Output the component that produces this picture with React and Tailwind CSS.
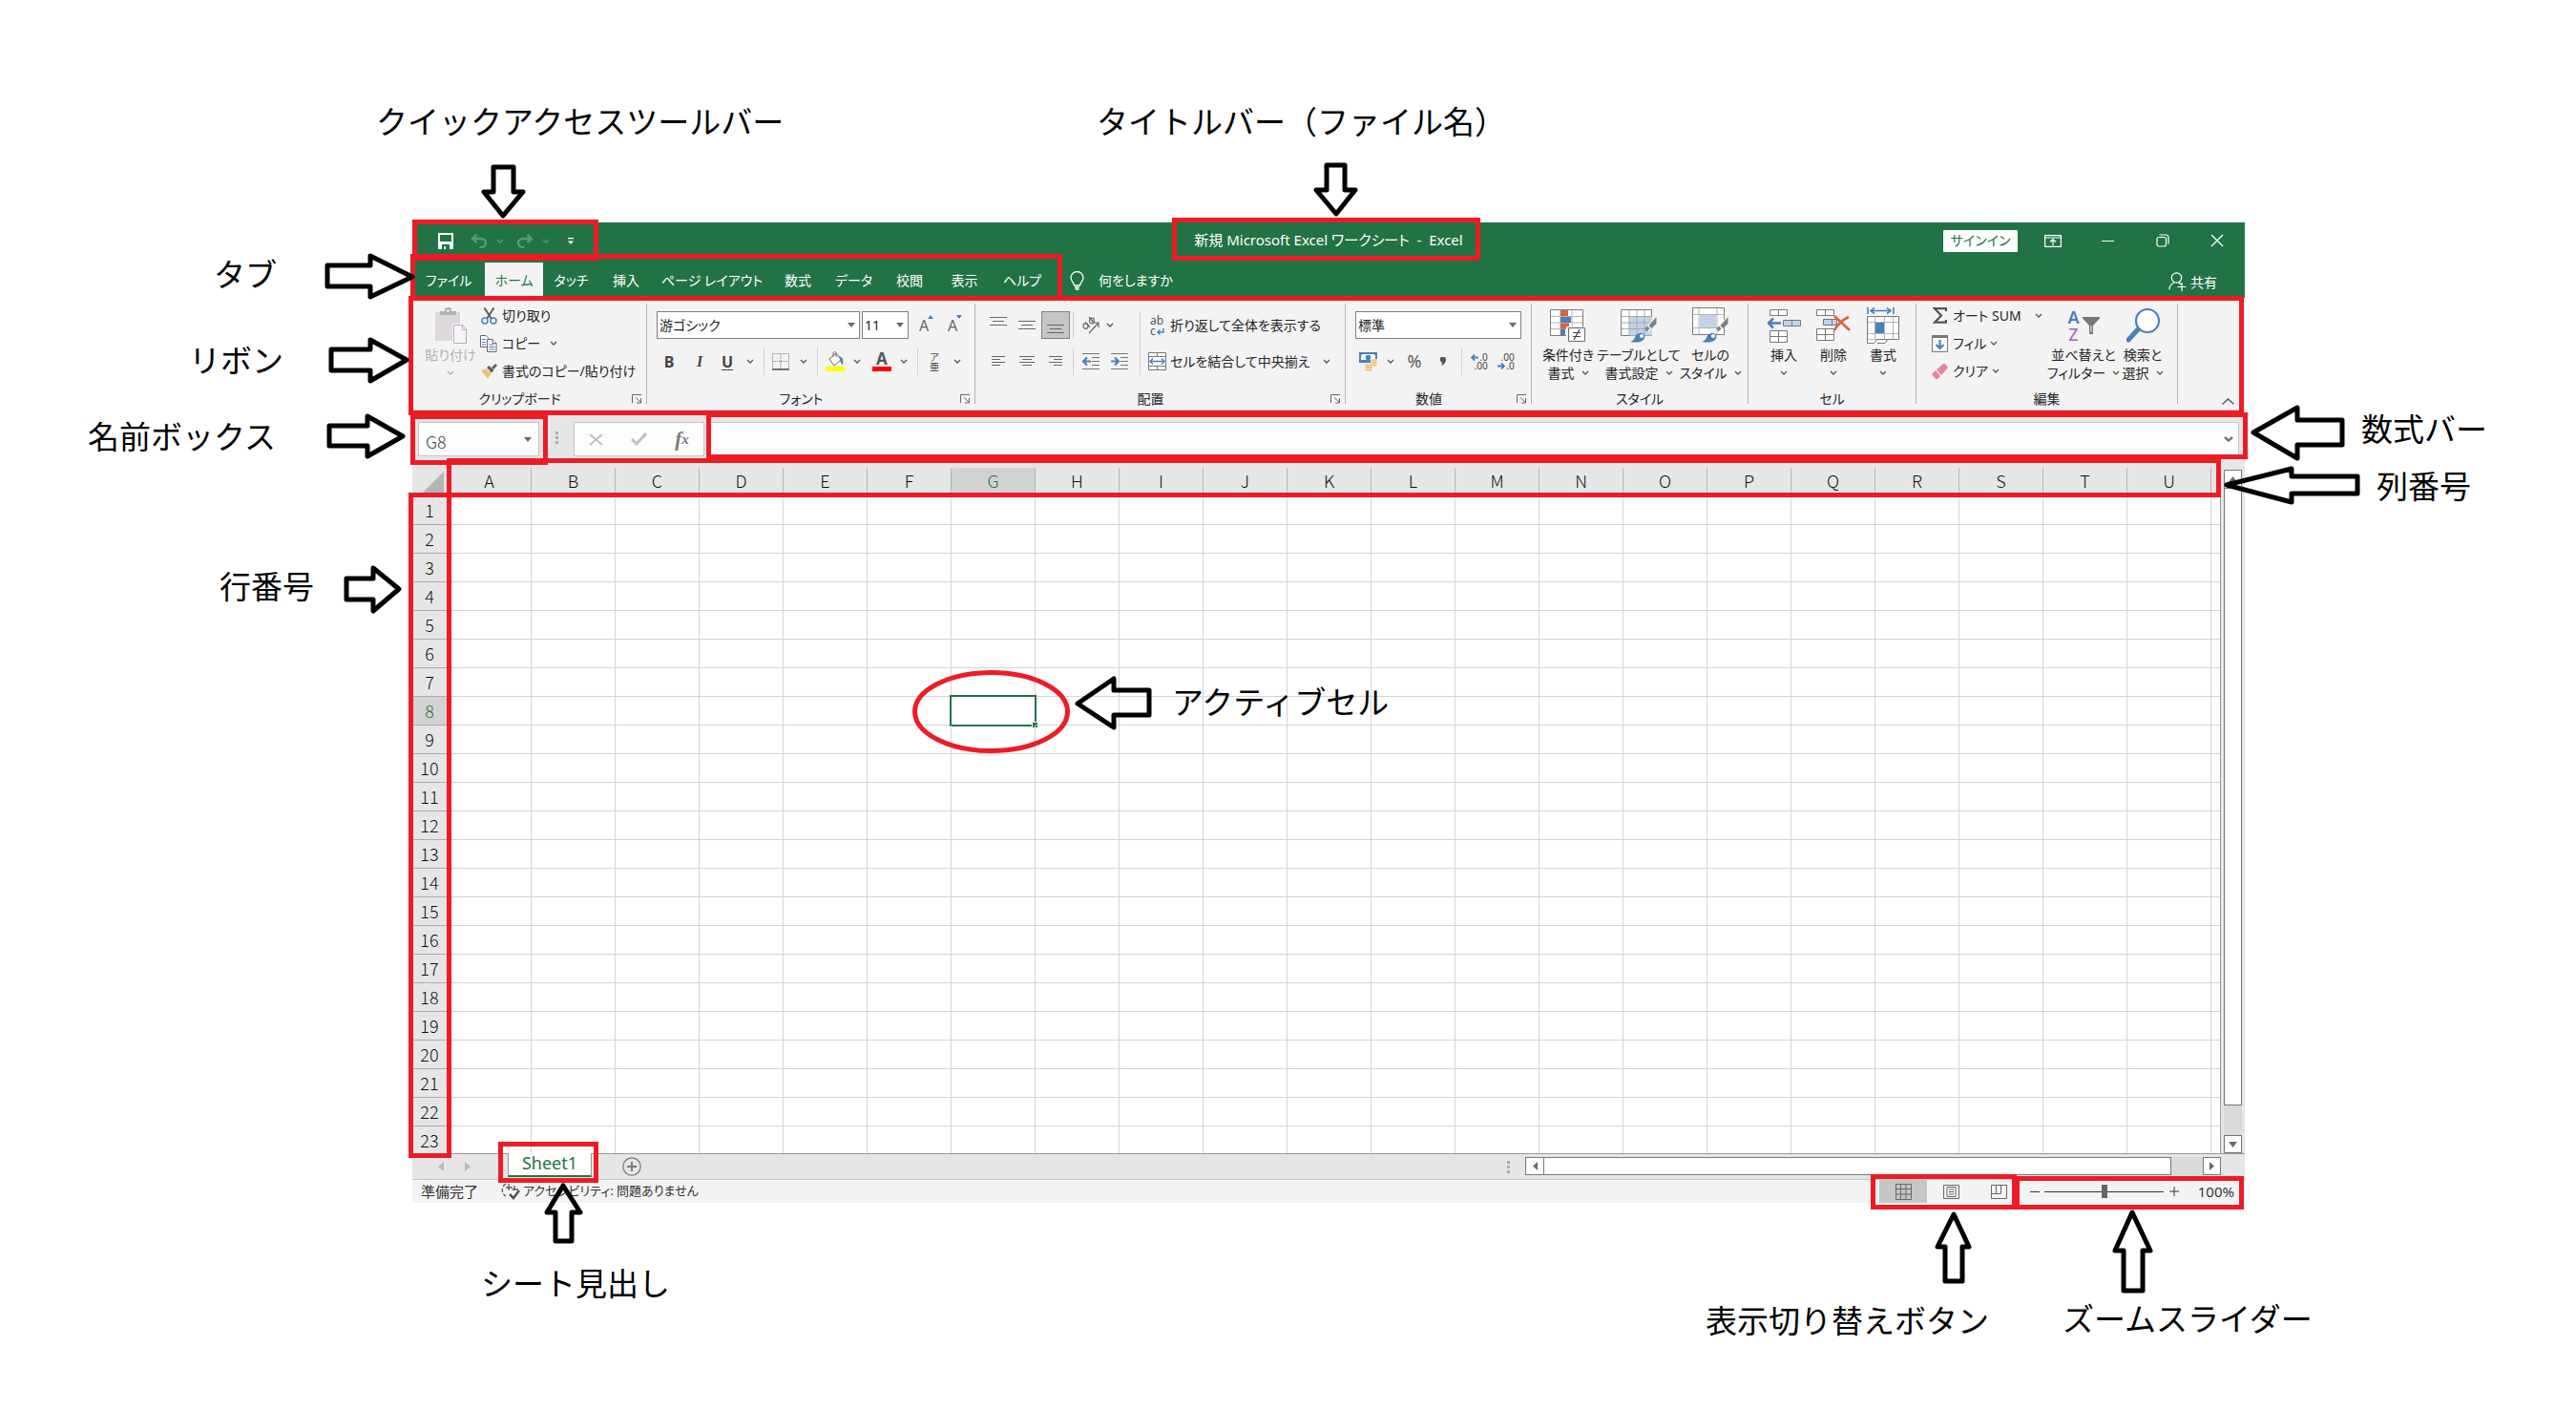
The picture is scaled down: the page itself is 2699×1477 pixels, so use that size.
import React, { useState } from 'react';

const COLUMNS = 'ABCDEFGHIJKLMNOPQRSTU'.split('');
const ROWS = Array.from({ length: 23 }, (_, i) => i + 1);

const TABS = [
  { name: 'ファイル', width: 'w-[76px]' },
  { name: 'ホーム', width: 'w-[61px]', active: true },
  { name: 'タッチ', width: 'w-[59px]' },
  { name: '挿入', width: 'w-[56px]' },
  { name: 'ページ レイアウト', width: 'w-[124px]' },
  { name: '数式', width: 'w-[56px]' },
  { name: 'データ', width: 'w-[61px]' },
  { name: '校閲', width: 'w-[56px]' },
  { name: '表示', width: 'w-[59px]' },
  { name: 'ヘルプ', width: 'w-[62px]' },
];

const NOTES = [
  { text: 'クイックアクセスツールバー', pos: 'left-[394px] top-[104px]' },
  { text: 'タイトルバー（ファイル名）', pos: 'left-[1149px] top-[104px]' },
  { text: 'タブ', pos: 'left-[224px] top-[264px]' },
  { text: 'リボン', pos: 'left-[198px] top-[354px]' },
  { text: '名前ボックス', pos: 'left-[92px] top-[434px]' },
  { text: '行番号', pos: 'left-[230px] top-[591px]' },
  { text: '数式バー', pos: 'left-[2474px] top-[426px]' },
  { text: '列番号', pos: 'left-[2490px] top-[486px]' },
  { text: 'アクティブセル', pos: 'left-[1228px] top-[712px]' },
  { text: 'シート見出し', pos: 'left-[504px] top-[1321px]' },
  { text: '表示切り替えボタン', pos: 'left-[1787px] top-[1360px]' },
  { text: 'ズームスライダー', pos: 'left-[2161px] top-[1358px]' },
];

const ARROWS = [
  '517,175 538,175 538,201 548,201 527,226 507,201 517,201',
  '1390,173 1409,173 1409,199 1420,199 1400,224 1379,199 1390,199',
  '343,278 388,278 388,268 432,290 388,311 388,300 343,300',
  '347,366 388,366 388,356 426,377 388,399 388,388 347,388',
  '345,446 385,446 385,436 422,457 385,478 385,467 345,467',
  '363,606 391,606 391,595 418,617 391,640 391,628 363,628',
  '2361,453 2407,427 2407,440 2454,440 2454,466 2407,466 2407,480',
  '2333,508 2401,491 2401,499 2470,499 2470,517 2401,517 2401,526',
  '1129,737 1167,711 1167,723 1204,723 1204,749 1167,749 1167,762',
  '590,1242 608,1270 599,1270 599,1300 582,1300 582,1270 573,1270',
  '2047,1272 2063,1306 2056,1306 2056,1342 2038,1342 2038,1306 2030,1306',
  '2234,1270 2253,1310 2245,1310 2245,1352 2225,1352 2225,1310 2216,1310',
];

// x, y, width, height of the outer edge
const FRAMES = [
  [432, 230, 195, 43],
  [430, 266, 683, 49],
  [1228, 228, 323, 45],
  [428, 310, 923, 125],
  [430, 434, 144, 53],
  [740, 432, 1615, 49],
  [468, 480, 1859, 41],
  [428, 516, 45, 697],
  [522, 1196, 105, 43],
  [1960, 1230, 153, 37],
  [2111, 1232, 240, 35],
];
FRAMES[3][2] = 1923;

/* ---------- small shared pieces ---------- */

function Chevron({ className = 'text-[#555]' }) {
  return (
    <svg width="8" height="5" viewBox="0 0 8 5" fill="none" stroke="currentColor" strokeWidth="1.3" className={className}>
      <path d="M1 1l3 3 3-3" />
    </svg>
  );
}

function Triangle({ className }) {
  return (
    <svg width="8" height="5" viewBox="0 0 8 5" fill="#6a6a6a" className={className}>
      <path d="M0 0h8L4 5z" />
    </svg>
  );
}

function Tool({ label, w, className = '', children }) {
  return (
    <button type="button" aria-label={label} className={`flex h-full shrink-0 items-center justify-center ${w} ${className}`}>
      {children}
    </button>
  );
}

function Divider({ w }) {
  return (
    <div className={`flex h-full justify-center shrink-0 ${w}`}>
      <div className="h-full w-px bg-[#d0d0d0]" />
    </div>
  );
}

function Combo({ label, value, w }) {
  return (
    <div className={`relative h-[29px] shrink-0 ${w}`}>
      <select aria-label={label} className="h-full w-full appearance-none border border-[#7f7f7f] bg-white pl-[2px] text-[14px] text-[#222]">
        <option>{value}</option>
      </select>
      <Triangle className="pointer-events-none absolute right-[5px] top-[12px]" />
    </div>
  );
}

function Group({ title, w, launcher, children }) {
  return (
    <section className={`flex shrink-0 ${w}`}>
      <div className="flex min-w-0 flex-1 flex-col">
        <div className="h-[95px]">{children}</div>
        <div className="flex h-[23px] items-center">
          <h2 className="flex-1 text-center text-[14px] leading-[20px]">{title}</h2>
          {launcher && (
            <button type="button" aria-label={`${title}の詳細`} className="w-[20px] pl-[5px]">
              <svg width="11" height="10" viewBox="0 0 11 10" fill="none" stroke="#666">
                <path d="M.5 9V.5H10M4 3.500l5.500 5M9.500 4v5H5" />
              </svg>
            </button>
          )}
        </div>
      </div>
      <div className="my-[6px] w-px bg-[#b4b4b4]" />
    </section>
  );
}

function BigButton({ icon, lines, w, muted }) {
  return (
    <button type="button" className={`flex shrink-0 flex-col items-center pt-[10px] ${w} ${muted ? 'text-[#b1b1b1]' : ''}`}>
      <span className="mb-[2px] flex h-[38px] items-center">{icon}</span>
      <span className="whitespace-nowrap text-[14px] leading-[19px]">{lines[0]}</span>
      <span className="flex h-[19px] items-center gap-[7px] whitespace-nowrap text-[14px] leading-[19px]">
        {lines[1]}
        <Chevron className={muted ? 'text-[#b1b1b1]' : 'text-[#555]'} />
      </span>
    </button>
  );
}

function ListButton({ icon, text, arrow, arrowGap = 'ml-[10px]' }) {
  return (
    <button type="button" className="flex h-[29px] items-center whitespace-nowrap text-[14px]">
      <span className="mr-[4px] flex w-[20px] justify-center">{icon}</span>
      {text}
      {arrow && (
        <span className={arrowGap}>
          <Chevron />
        </span>
      )}
    </button>
  );
}

/* ---------- icons ---------- */

const SaveIcon = () => (
  <svg width="16" height="17" viewBox="0 0 16 17">
    <path d="M0 0h16v17H0zM2 2v7h12V2zM4 12v5h2v-3h2v3h4v-5z" fill="#fff" fillRule="evenodd" />
  </svg>
);

const UndoIcon = ({ flip }) => (
  <svg width="18" height="15" viewBox="0 0 18 15" fill="none" stroke="#599a75" strokeWidth="2.500" className={flip ? '-scale-x-100' : ''}>
    <path d="M6.500 .8L2 5l4.500 4M2.500 5H11c3 0 5 2 5 4.500S14 14 11 14H9.500" />
  </svg>
);

const PasteIcon = () => (
  <svg width="35" height="38" viewBox="0 0 35 38">
    <path d="M1 5h26v30H1z" fill="#dcd8dc" />
    <path d="M6 8V4h5V1.500L13 0h3l2 1.500V4h5v4z" fill="#b4b0b4" />
    <path d="M13 2.500h3v2h-3z" fill="#f3f3f3" />
    <path d="M19 17h16v21H19z" fill="#f3f3f3" />
    <path d="M20.500 18.500h9l4 5v14h-13zM29.500 18.500v5h4" fill="#f8f3f9" stroke="#b4b0b4" />
  </svg>
);

const CutIcon = () => (
  <svg width="17" height="18" viewBox="0 0 17 18" fill="none">
    <path d="M3.500 .5L11 12M13.500 .5L6 12" stroke="#5f5f5f" strokeWidth="2" />
    <circle cx="4" cy="14" r="3" stroke="#4a80bc" strokeWidth="1.500" />
    <circle cx="13" cy="14" r="3" stroke="#4a80bc" strokeWidth="1.500" />
  </svg>
);

const CopyIcon = () => (
  <svg width="18" height="18" viewBox="0 0 18 18" fill="#fff" stroke="#6a6a6a">
    <path d="M.5 .5H6l3 3v9H.5z" />
    <path d="M7.500 4.500H13l4 4v9H7.500z" />
    <path d="M13 4.500v4h4" />
    <path d="M2 4.500h4M2 7.500h4M2 10h4M9.500 10h5M9.500 12.500h6M9.500 15h6" stroke="#4a80bc" />
  </svg>
);

const BrushIcon = () => (
  <svg width="17" height="16" viewBox="0 0 17 16">
    <path d="M0 7l5-2 6 5-4 6z" fill="#eec27e" />
    <path d="M6 4l2.500-2 5 5L11 9.500z" fill="#5f5f5f" />
    <path d="M11 4l4-4 2 2-4 4z" fill="#5f5f5f" />
  </svg>
);

const FontSizeIcon = ({ down }) => (
  <span className="relative text-[16px] leading-[20px] text-[#666]">
    A
    <svg width="6" height="4" viewBox="0 0 6 4" fill="#4a80bc" className="absolute -right-[5px] -top-[1px]">
      <path d={down ? 'M0 0h6L3 4z' : 'M0 4h6L3 0z'} />
    </svg>
  </span>
);

const BorderIcon = () => (
  <svg width="18" height="18" viewBox="0 0 18 18" fill="none" stroke="#777">
    <path d="M.5 .5h17v16H.5zM9 1v16M1 8.500h16" strokeDasharray="1 1" />
    <path d="M0 17h18" stroke="#555" strokeWidth="1.500" />
  </svg>
);

const FillColorIcon = () => (
  <svg width="21" height="21" viewBox="0 0 21 21">
    <path d="M0 16h20v5H0z" fill="#ff0" />
    <path d="M4 8l7-6 5 7-7 6z" fill="#fff" stroke="#6a6a6a" />
    <path d="M8 6V2c0-2 3-2 3 0v4" fill="none" stroke="#6a6a6a" />
    <path d="M14 5c4 1 5 4 4 9-2-1-3-3-2-5z" fill="#4a80bc" />
  </svg>
);

const FontColorIcon = () => (
  <span className="flex flex-col items-center">
    <span className="text-[17px] font-bold leading-[16px] text-[#555]">A</span>
    <span className="h-[5px] w-[20px] bg-[#f00]" />
  </span>
);

const LINE_SETS = {
  top: 'M0 1.500h18M3 5.500h12M0 9.500h18',
  middle: 'M0 5.500h18M3 9.500h12M0 13.500h18',
  bottom: 'M0 9.500h18M3 13.500h12M0 17.500h18',
  left: 'M2 4.500h14M2 7.500h9M2 10.500h14M2 13.500h9',
  center: 'M1 4.500h16M4 7.500h10M1 10.500h16M4 13.500h10',
  right: 'M2 4.500h14M7 7.500h9M2 10.500h14M7 13.500h9',
};

const LinesIcon = ({ kind }) => (
  <svg width="18" height="19" viewBox="0 0 18 19" stroke="#666">
    <path d={LINE_SETS[kind]} />
  </svg>
);

const OrientationIcon = () => (
  <svg width="20" height="20" viewBox="0 0 20 20" fill="none" stroke="#666" strokeWidth="1.200">
    <path d="M8 18L18 7M13 7h5v5" />
    <ellipse cx="4.500" cy="10.500" rx="2.500" ry="2.800" />
    <path d="M4 6.500l5 5M8 1l5 6" />
    <ellipse cx="11" cy="5" rx="2.500" ry="2.800" />
  </svg>
);

const IndentIcon = ({ out }) => (
  <svg width="18" height="17" viewBox="0 0 18 17" fill="none" stroke="#777">
    <path d="M0 .5h18M10 4.500h8M10 8.500h8M10 12.500h8M0 16.500h18" />
    <path d={out ? 'M9 8.500H2M5 4.500l-4 4 4 4' : 'M0 8.500h7M4 4.500l4 4-4 4'} stroke="#4a80bc" strokeWidth="2.200" />
  </svg>
);

const WrapIcon = () => (
  <span className="relative flex flex-col text-[12px] leading-[11px] text-[#555]">
    <span className="h-[11px]">ab</span>
    <span className="h-[11px] text-left">c</span>
    <svg width="9" height="8" viewBox="0 0 9 8" fill="none" stroke="#4a80bc" strokeWidth="1.500" className="absolute -right-px bottom-0">
      <path d="M8 0v4H2M4.500 1.500L2 4l2.500 2.500" />
    </svg>
  </span>
);

const MergeIcon = () => (
  <svg width="19" height="19" viewBox="0 0 19 19" fill="#fff" stroke="#777">
    <path d="M.5 .5h18v18H.5z" />
    <path d="M.5 4.500h18M.5 14.500h18M9.500 .5v4M9.500 14.500v4" />
    <path d="M2 9.500h15M5 6.500l-3 3 3 3M14 6.500l3 3-3 3" stroke="#4a80bc" strokeWidth="1.500" fill="none" />
  </svg>
);

const MoneyIcon = () => (
  <svg width="20" height="20" viewBox="0 0 20 20">
    <path d="M0 0h19v11H0z" fill="#4a80bc" />
    <path d="M2 3l2-1h11l2 1v5H2z" fill="#fff" />
    <circle cx="9.500" cy="5.500" r="2.800" fill="#4a80bc" />
    <path d="M12 7h7v10h-7zM6 12h8v8H6z" fill="#f3f3f3" />
    <path d="M12.500 8.500h6M12.500 11h6M12.500 13.500h6M6.500 13.500h7M6.500 16h7M6.500 18.500h7" stroke="#eec27e" strokeWidth="1.800" />
  </svg>
);

const ArrowGlyph = ({ left }) => (
  <svg width="8" height="7" viewBox="0 0 8 7" fill="none" stroke="#4a80bc" strokeWidth="1.800">
    <path d={left ? 'M8 3.500H1.500M4 .5l-3 3 3 3' : 'M0 3.500h6.500M4 .5l3 3-3 3'} />
  </svg>
);

const DecimalIcon = ({ less }) => (
  <span className="flex flex-col text-[10px] leading-[9px] text-[#444]">
    <span className="flex items-center justify-end gap-px">
      {!less && <ArrowGlyph left />}
      {less ? '.00' : '.0'}
    </span>
    <span className="flex items-center justify-end gap-px">
      {less && <ArrowGlyph />}
      {less ? '.0' : '.00'}
    </span>
  </span>
);

const ConditionalIcon = () => (
  <svg width="38" height="36" viewBox="0 0 38 36">
    <path d="M.5 1.500h34v27H.5z" fill="#fff" stroke="#7a7a7a" />
    <path d="M1 8.500h33M1 15h33M1 21.500h33M11 2v26M23 2v26" stroke="#b4b4b4" />
    <path d="M11 2h8v6h-8zM11 15.500h9v6h-9z" fill="#dc6140" />
    <path d="M11 9h11v6H11zM11 22h5v6h-5z" fill="#4a80bc" />
    <path d="M17 19h21v17H17z" fill="#f3f3f3" />
    <path d="M19.500 20.500h17v14h-17z" fill="#fff" stroke="#6a6a6a" />
    <path d="M24 25.500h8M24 29.500h8M31 22l-6 11" stroke="#444" strokeWidth="1.200" />
  </svg>
);

const BrushOverlay = () => (
  <>
    <path d="M38 7v9l-9 9-4-4z" fill="#f3f3f3" />
    <path d="M37.500 9v7l-5 5-3-3zM25 21l3-2.500 2.500 2.500-3 3.500z" fill="#808080" />
    <path d="M10 35c6-1 4-8 10-9 5-1 7 4 4 7-3 3-9 3-14 2z" fill="#4a80bc" />
    <path d="M20 28c2-2 4-1 4 1s-2 3-4 1z" fill="#fff" />
  </>
);

const TableFormatIcon = () => (
  <svg width="38" height="36" viewBox="0 0 38 36">
    <path d="M.5 1.500h32v27H.5z" fill="#fff" stroke="#7a7a7a" />
    <path d="M9 8.500h24v20H9z" fill="#c0d3e9" />
    <path d="M1 8.500h31M1 15h31M1 21.500h31M9 2v26M17 2v26M25 2v26" stroke="#a5aab0" />
    <BrushOverlay />
  </svg>
);

const CellStyleIcon = () => (
  <svg width="38" height="38" viewBox="0 -1 38 38">
    <path d="M.5 -.5h33v28H.5z" fill="#fff" stroke="#7a7a7a" />
    <path d="M1 6.500h32M1 20.500h32M7 0v27M26 0v27" stroke="#b4b4b4" />
    <path d="M8 7h17v13H8z" fill="#c0d3e9" />
    <BrushOverlay />
  </svg>
);

const InsertIcon = () => (
  <svg width="36" height="36" viewBox="0 0 36 36" fill="#fff" stroke="#777">
    <path d="M3.500 1.500h18v6h-18zM12.500 1.500v6M3.500 23.500h18v12h-18zM3.500 29.500h18M12.500 23.500v12" />
    <path d="M17.500 12.500h18v6h-18zM26.500 12.500v6" fill="#c0d3e9" />
    <path d="M15 15.500H2M7 10.500l-5 5 5 5" stroke="#4a80bc" strokeWidth="2.500" fill="none" />
  </svg>
);

const DeleteIcon = () => (
  <svg width="36" height="36" viewBox="0 0 36 36" fill="#fff" stroke="#777">
    <path d="M.5 1.500h18v6H.5zM9.500 1.500v6M.5 21.500h18v12H.5zM.5 27.500h18M9.500 21.500v12" />
    <path d="M7.500 11.500h14v6h-14zM16.500 11.500v6" fill="#c0d3e9" />
    <path d="M19 8l16 15M34 9C28 12 22 17 19 23" stroke="#dc6140" strokeWidth="2.600" fill="none" />
  </svg>
);

const FormatIcon = () => (
  <svg width="35" height="38" viewBox="0 0 35 38" fill="#fff" stroke="#777">
    <path d="M1 0v7M28 0v7M4 3.500h21M8 .5l-4 3 4 3M21 .5l4 3-4 3" stroke="#4a80bc" strokeWidth="1.600" fill="none" />
    <path d="M.5 9.500h33v24H.5z" />
    <path d="M1 15.500h32M1 27.500h32M8.500 10v23M18.500 10v23M27.500 10v23" stroke="#b4b4b4" />
    <path d="M9 16h9v11H9z" fill="#4a80bc" stroke="none" />
    <path d="M.5 33.500v4h7l3-4M11 37.500h8l3-4" />
  </svg>
);

const SigmaIcon = () => (
  <svg width="15" height="17" viewBox="0 0 15 17" fill="none" stroke="#555" strokeWidth="2.200">
    <path d="M14 4V1.200H2L9 8.500l-7 7.200h12V13" />
  </svg>
);

const FillDownIcon = () => (
  <svg width="17" height="18" viewBox="0 0 17 18">
    <path d="M.5 .5h16v17H.5z" fill="#fff" stroke="#777" />
    <path d="M0 0h17v3H0z" fill="#777" />
    <path d="M8.500 5v9M4.500 10l4 4 4-4" fill="none" stroke="#4a80bc" strokeWidth="2.200" />
  </svg>
);

const EraserIcon = () => (
  <svg width="17" height="16" viewBox="0 0 17 16" fill="#e8849a">
    <path d="M5 6l7-6h2l3 4-7 8z" />
    <path d="M4 7l5 6-3 3H4l-4-5z" />
  </svg>
);

const SortIcon = () => (
  <span className="flex items-center gap-[3px]">
    <span className="flex flex-col text-[18px] leading-[18px]">
      <span className="font-semibold text-[#4a80bc]">A</span>
      <span className="text-[#9b5fb8]">Z</span>
    </span>
    <svg width="18" height="18" viewBox="0 0 18 18" fill="#777">
      <path d="M0 0h18v1.500L11 9v9H7V9L0 1.500z" />
      <path d="M8.500 9h1v7h-1z" fill="#f3f3f3" />
    </svg>
  </span>
);

const FindIcon = () => (
  <svg width="35" height="36" viewBox="0 0 35 36" fill="none" stroke="#4a80bc">
    <path d="M13 21L2 33" strokeWidth="5" strokeLinecap="round" />
    <circle cx="22" cy="13" r="12" fill="#fff" strokeWidth="2.200" />
  </svg>
);

/* ---------- window parts ---------- */

function TitleBar() {
  return (
    <header className="relative flex h-[42px] items-center justify-between bg-[#217346] text-white">
      <div className="flex items-center pb-[4px] pl-[27px]">
        <button type="button" aria-label="上書き保存"><SaveIcon /></button>
        <button type="button" aria-label="元に戻す" className="ml-[18px]"><UndoIcon /></button>
        <span className="ml-[9px]"><Chevron className="text-[#599a75]" /></span>
        <button type="button" aria-label="やり直し" className="ml-[13px]"><UndoIcon flip /></button>
        <span className="ml-[9px]"><Chevron className="text-[#599a75]" /></span>
        <button type="button" aria-label="クイック アクセス ツール バーのユーザー設定" className="ml-[19px]">
          <svg width="6" height="7" viewBox="0 0 6 7" fill="#fff">
            <path d="M0 0h6v1.300H0zM0 3.500h6L3 7z" />
          </svg>
        </button>
      </div>
      <h1 className="absolute inset-x-0 top-[8px] text-center text-[15px] leading-[20px] whitespace-pre">
        新規 Microsoft Excel ワークシート  -  Excel
      </h1>
      <div className="relative flex items-center pb-[4px]">
        <button type="button" className="mr-[8px] h-[23px] w-[78px] rounded-[1px] bg-white text-[14px] leading-[20px] text-[#217346]">サインイン</button>
        <button type="button" aria-label="リボンの表示オプション" className="flex w-[58px] justify-center">
          <svg width="18" height="13" viewBox="0 0 18 13" fill="none" stroke="#fff" strokeWidth="1.200">
            <path d="M.6 .6h16.800v11.800H.6zM.6 3h16.800M9 11V5M6 7.500l3-3 3 3" />
          </svg>
        </button>
        <button type="button" aria-label="最小化" className="flex w-[57px] justify-center">
          <span className="h-px w-[13px] bg-white" />
        </button>
        <button type="button" aria-label="元に戻す (縮小)" className="flex w-[57px] justify-center">
          <svg width="14" height="14" viewBox="0 0 14 14" fill="none" stroke="#fff" strokeWidth="1.200">
            <rect x="1" y="3.500" width="9.500" height="9.500" rx="2" />
            <path d="M3.500 1h6.500c2 0 3 1 3 3v6.500" />
          </svg>
        </button>
        <button type="button" aria-label="閉じる" className="flex w-[58px] justify-center">
          <svg width="14" height="14" viewBox="0 0 14 14" stroke="#fff" strokeWidth="1.300">
            <path d="M1 1l12 12M13 1L1 13" />
          </svg>
        </button>
      </div>
    </header>
  );
}

function TabRow() {
  return (
    <nav className="flex h-[37px] bg-[#217346] text-[14px] text-white">
      {TABS.map((tab) => (
        <button
          key={tab.name}
          type="button"
          className={`whitespace-nowrap ${tab.width} ${tab.active ? 'bg-[#f3f3f3] text-[#217346]' : ''}`}
        >
          {tab.name}
        </button>
      ))}
      <button type="button" className="ml-[19px] flex items-center">
        <svg width="15" height="20" viewBox="0 0 15 20" fill="none" stroke="#fff" strokeWidth="1.300" className="mr-[15px]">
          <path d="M4.500 15c0-3-3.500-4-3.500-8a6.500 6.500 0 0113 0c0 4-3.500 5-3.500 8zM5 17h5M5.500 19h4" />
        </svg>
        何をしますか
      </button>
      <button type="button" className="ml-auto mr-[29px] flex items-center gap-[4px] pt-[3px]">
        <svg width="19" height="20" viewBox="0 0 19 20" fill="none" stroke="#fff" strokeWidth="1.200">
          <circle cx="8.500" cy="6" r="5.200" />
          <path d="M1 18.500c0-4 2-6.500 5-7.500M11 11l2 2M14 11v9M9.500 15.500h9" />
        </svg>
        共有
      </button>
    </nav>
  );
}

function Ribbon() {
  return (
    <div className="flex h-[118px] border-b border-[#d2d2d2] bg-[#f3f3f3] text-[#262626]">
      <Group title="クリップボード" w="w-[246px]" launcher>
        <div className="flex">
          <BigButton icon={<PasteIcon />} lines={['貼り付け', '']} w="ml-[10px] w-[60px]" muted />
          <div className="flex flex-col pt-[4px]">
            <ListButton icon={<CutIcon />} text="切り取り" />
            <ListButton icon={<CopyIcon />} text="コピー" arrow />
            <ListButton icon={<BrushIcon />} text="書式のコピー/貼り付け" />
          </div>
        </div>
      </Group>

      <Group title="フォント" w="w-[344px]" launcher>
        <div className="flex flex-col gap-[9px] pt-[14px]">
          <div className="flex h-[29px] gap-[2px] pl-[10px]">
            <Combo label="フォント" value="游ゴシック" w="w-[213px]" />
            <Combo label="フォント サイズ" value="11" w="w-[49px]" />
            <Tool label="フォント サイズの拡大" w="w-[28px]"><FontSizeIcon /></Tool>
            <Tool label="フォント サイズの縮小" w="w-[28px]"><FontSizeIcon down /></Tool>
          </div>
          <div className="flex h-[29px] items-center pl-[6px] text-[16px] text-[#444]">
            <Tool label="太字" w="w-[34px]" className="font-bold">B</Tool>
            <Tool label="斜体" w="w-[30px]" className="font-['Liberation_Serif',serif] font-bold italic">I</Tool>
            <Tool label="下線" w="w-[28px]" className="font-bold underline underline-offset-2">U</Tool>
            <Tool label="下線の種類" w="w-[20px]"><Chevron /></Tool>
            <Divider w="w-[8px]" />
            <Tool label="罫線" w="w-[28px]"><BorderIcon /></Tool>
            <Tool label="罫線の種類" w="w-[20px]"><Chevron /></Tool>
            <Divider w="w-[8px]" />
            <Tool label="塗りつぶしの色" w="w-[30px]"><FillColorIcon /></Tool>
            <Tool label="塗りつぶしの色を選択" w="w-[16px]"><Chevron /></Tool>
            <Tool label="フォントの色" w="w-[36px]"><FontColorIcon /></Tool>
            <Tool label="フォントの色を選択" w="w-[10px]"><Chevron /></Tool>
            <Divider w="w-[18px]" />
            <Tool label="ふりがな" w="w-[18px]">
              <span className="flex flex-col items-center text-[10px] leading-[10px]">
                <span>ア</span>
                <span>亜</span>
              </span>
            </Tool>
            <Tool label="ふりがなの設定" w="w-[30px]"><Chevron /></Tool>
          </div>
        </div>
      </Group>

      <Group title="配置" w="w-[388px]" launcher>
        <div className="flex pt-[14px]">
          <div className="flex flex-col gap-[9px] pl-[9px]">
            <div className="flex h-[29px]">
              <Tool label="上揃え" w="w-[30px]"><LinesIcon kind="top" /></Tool>
              <Tool label="上下中央揃え" w="w-[30px]"><LinesIcon kind="middle" /></Tool>
              <Tool label="下揃え" w="w-[30px]" className="border border-[#7f7f7f] bg-[#c6c6c6]"><LinesIcon kind="bottom" /></Tool>
              <Divider w="w-[6px]" />
              <Tool label="方向" w="w-[32px]"><OrientationIcon /></Tool>
              <Tool label="方向の設定" w="w-[8px]"><Chevron /></Tool>
            </div>
            <div className="flex h-[29px]">
              <Tool label="左揃え" w="w-[30px]"><LinesIcon kind="left" /></Tool>
              <Tool label="中央揃え" w="w-[30px]"><LinesIcon kind="center" /></Tool>
              <Tool label="右揃え" w="w-[30px]"><LinesIcon kind="right" /></Tool>
              <Divider w="w-[6px]" />
              <Tool label="インデントを減らす" w="w-[32px]"><IndentIcon out /></Tool>
              <Tool label="インデントを増やす" w="w-[28px]"><IndentIcon /></Tool>
            </div>
          </div>
          <div className="mx-[7px] w-px bg-[#d0d0d0]" />
          <div className="flex flex-col gap-[9px]">
            <ListButton icon={<WrapIcon />} text="折り返して全体を表示する" />
            <ListButton icon={<MergeIcon />} text="セルを結合して中央揃え" arrow arrowGap="ml-[14px]" />
          </div>
        </div>
      </Group>

      <Group title="数値" w="w-[195px]" launcher>
        <div className="flex flex-col gap-[9px] pl-[10px] pt-[14px]">
          <Combo label="表示形式" value="標準" w="w-[174px]" />
          <div className="flex h-[29px] items-center text-[#555]">
            <Tool label="通貨表示形式" w="w-[28px]"><MoneyIcon /></Tool>
            <Tool label="通貨の選択" w="w-[18px]"><Chevron /></Tool>
            <Tool label="パーセント スタイル" w="w-[32px]" className="text-[18px]">%</Tool>
            <Tool label="桁区切りスタイル" w="w-[28px]">
              <svg width="6" height="9" viewBox="0 0 6 9" fill="#555">
                <path d="M1 0h4l1 2c0 4-2 6-5 7l1-3-2-2V1z" />
              </svg>
            </Tool>
            <Divider w="w-[10px]" />
            <Tool label="小数点以下の表示桁数を増やす" w="w-[28px]"><DecimalIcon /></Tool>
            <Tool label="小数点以下の表示桁数を減らす" w="w-[28px]"><DecimalIcon less /></Tool>
          </div>
        </div>
      </Group>

      <Group title="スタイル" w="w-[227px]">
        <div className="flex pl-[6px]">
          <BigButton icon={<ConditionalIcon />} lines={['条件付き', '書式']} w="w-[64px]" />
          <BigButton icon={<TableFormatIcon />} lines={['テーブルとして', '書式設定']} w="w-[84px]" />
          <BigButton icon={<CellStyleIcon />} lines={['セルの', 'スタイル']} w="w-[66px]" />
        </div>
      </Group>

      <Group title="セル" w="w-[176px]">
        <div className="flex pl-[11px]">
          <BigButton icon={<InsertIcon />} lines={['挿入', '']} w="w-[52px]" />
          <BigButton icon={<DeleteIcon />} lines={['削除', '']} w="w-[52px]" />
          <BigButton icon={<FormatIcon />} lines={['書式', '']} w="w-[52px]" />
        </div>
      </Group>

      <Group title="編集" w="w-[274px]">
        <div className="flex">
          <div className="flex w-[140px] flex-col pl-[14px] pt-[4px]">
            <ListButton icon={<SigmaIcon />} text="オート SUM" arrow arrowGap="ml-[14px]" />
            <ListButton icon={<FillDownIcon />} text="フィル" arrow arrowGap="ml-[4px]" />
            <ListButton icon={<EraserIcon />} text="クリア" arrow arrowGap="ml-[4px]" />
          </div>
          <BigButton icon={<SortIcon />} lines={['並べ替えと', 'フィルター']} w="w-[70px]" />
          <BigButton icon={<FindIcon />} lines={['検索と', '選択']} w="w-[54px]" />
        </div>
      </Group>

      <button type="button" aria-label="リボンを折りたたむ" className="ml-auto mr-[11px] self-end pb-[5px]">
        <svg width="13" height="7" viewBox="0 0 13 7" fill="none" stroke="#555" strokeWidth="1.300">
          <path d="M.5 6.500l6-5.500 6 5.500" />
        </svg>
      </button>
    </div>
  );
}

function FormulaBar() {
  return (
    <div className="flex h-[60px] items-start bg-[#e6e6e6] pl-[6px] pr-[6px] pt-[12px]">
      <div className="relative h-[36px] w-[127px]">
        <input aria-label="名前ボックス" defaultValue="G8" className="h-full w-full border border-[#c6c6c6] bg-[#fdfdfd] pl-[7px] pt-[3px] font-['Noto_Sans_CJK_JP',sans-serif] text-[18px] font-light text-[#444]" />
        <Triangle className="absolute right-[8px] top-[16px]" />
      </div>
      <div className="ml-[17px] mt-[10px] flex flex-col gap-[2px]">
        <span className="size-[3px] bg-[#ababab]" />
        <span className="size-[3px] bg-[#ababab]" />
        <span className="size-[3px] bg-[#ababab]" />
      </div>
      <div className="ml-[16px] flex h-[36px] w-[137px] items-center border border-[#c6c6c6] bg-[#fdfdfd]">
        <Tool label="キャンセル" w="w-[44px]">
          <svg width="15" height="13" viewBox="0 0 15 13" stroke="#c0c0c0" strokeWidth="2"><path d="M1 1l13 11M14 1L1 12" /></svg>
        </Tool>
        <Tool label="入力" w="w-[46px]">
          <svg width="17" height="14" viewBox="0 0 17 14" fill="none" stroke="#c0c0c0" strokeWidth="3"><path d="M1 7l5 5L16 1" /></svg>
        </Tool>
        <Tool label="関数の挿入" w="w-[45px]" className="font-['Liberation_Serif',serif] font-bold italic text-[#777]">
          <span className="text-[21px] leading-[30px]">f</span>
          <span className="text-[15px] leading-[30px]">x</span>
        </Tool>
      </div>
      <div className="relative ml-[3px] h-[36px] flex-1">
        <input aria-label="数式バー" className="h-full w-full border border-[#c6c6c6] bg-[#fdfdfd] px-2 text-[18px]" />
        <svg width="10" height="6" viewBox="0 0 10 6" fill="none" stroke="#777" strokeWidth="2.500" className="absolute right-[6px] top-[15px]">
          <path d="M1 1l4 3.500L9 1" />
        </svg>
      </div>
    </div>
  );
}

function Sheet({ active }) {
  return (
    <div className="flex h-[718px] bg-[#e6e6e6]">
      <div className="min-w-0 flex-1 overflow-hidden border-r border-[#9a9a9a] bg-white">
        <table className="w-full table-fixed border-separate border-spacing-0 font-['Noto_Sans_CJK_JP',sans-serif] text-[18px] font-light text-[#111]">
          <colgroup>
            <col className="w-[37px]" />
            {COLUMNS.map((c) => <col key={c} className="w-[88px]" />)}
            <col />
          </colgroup>
          <thead>
            <tr className="h-[30px] bg-[#e6e6e6]">
              <th className="p-0">
                <svg width="22" height="22" viewBox="0 0 22 22" fill="#b4b4b4" className="ml-[11px]"><path d="M22 0v22H0z" /></svg>
              </th>
              {COLUMNS.map((c) => (
                <th
                  key={c}
                  scope="col"
                  className={`border-r border-[#b4b4b4] p-0 pb-[4px] font-light leading-[26px] ${c === active.col ? 'bg-[#d2d2d2] text-[#217346]' : ''}`}
                >
                  {c}
                </th>
              ))}
              <th className="p-0" />
            </tr>
          </thead>
          <tbody>
            {ROWS.map((r) => (
              <tr key={r} className="h-[30px]">
                <th
                  scope="row"
                  className={`border-b border-r border-b-[#ababab] border-r-[#ababab] p-0 font-light leading-[29px] ${r === active.row ? 'bg-[#d2d2d2] text-[#217346]' : 'bg-[#e6e6e6]'}`}
                >
                  {r}
                </th>
                {COLUMNS.map((c) => (
                  <td key={c} className="relative border-b border-r border-[#d4d4d4] p-0">
                    {c === active.col && r === active.row && (
                      <div className="absolute -bottom-[2px] -left-[2px] -right-[2px] -top-[2px] border-2 border-[#217346]">
                        <span className="absolute -bottom-[4px] -right-[4px] size-[7px] border border-white bg-[#217346]" />
                      </div>
                    )}
                  </td>
                ))}
                <td className="border-b border-[#d4d4d4] p-0" />
              </tr>
            ))}
          </tbody>
        </table>
      </div>
      <div className="mt-[2px] flex w-[25px] flex-col pl-[3px] pr-[3px]">
        <button type="button" aria-label="上へスクロール" className="flex h-[20px] items-center justify-center border border-[#777] bg-white">
          <svg width="9" height="6" viewBox="0 0 9 6" fill="#6a6a6a"><path d="M0 6h9L4.500 0z" /></svg>
        </button>
        <div className="flex-1 bg-[#dadada]">
          <div className="h-[646px] border border-t-0 border-[#777] bg-white" />
        </div>
        <button type="button" aria-label="下へスクロール" className="flex h-[19px] items-center justify-center border border-[#777] bg-white">
          <svg width="9" height="6" viewBox="0 0 9 6" fill="#6a6a6a"><path d="M0 0h9L4.500 6z" /></svg>
        </button>
      </div>
    </div>
  );
}

function SheetTabs() {
  return (
    <div className="flex h-[28px] border-b border-t border-b-[#c6c6c6] border-t-[#9a9a9a] bg-[#e6e6e6]">
      <div className="flex w-[100px] items-center gap-[22px] pl-[27px]">
        <svg width="6" height="10" viewBox="0 0 6 10" fill="#b8b8b8"><path d="M6 0v10L0 5z" /></svg>
        <svg width="6" height="10" viewBox="0 0 6 10" fill="#b8b8b8"><path d="M0 0v10l6-5z" /></svg>
      </div>
      <button type="button" className="-mt-px h-[25px] w-[88px] border-b-2 border-l border-r border-b-[#217346] border-l-[#9a9a9a] border-r-[#9a9a9a] bg-white pb-[3px] text-[18px] leading-[20px] text-[#217346]">
        Sheet1
      </button>
      <button type="button" aria-label="新しいシート" className="ml-[32px]">
        <svg width="20" height="20" viewBox="0 0 20 20" fill="none" stroke="#777" strokeWidth="1.200">
          <circle cx="10" cy="10" r="9.200" />
          <path d="M10 5v10M5 10h10" strokeWidth="1.800" />
        </svg>
      </button>
      <div className="ml-auto mr-[16px] flex flex-col justify-center gap-[2px]">
        <span className="size-[3px] bg-[#ababab]" />
        <span className="size-[3px] bg-[#ababab]" />
        <span className="size-[3px] bg-[#ababab]" />
      </div>
      <div className="mr-[25px] mt-[3px] flex h-[19px] w-[729px]">
        <button type="button" aria-label="左へスクロール" className="flex w-[20px] items-center justify-center border border-[#777] bg-white">
          <svg width="5" height="9" viewBox="0 0 5 9" fill="#6a6a6a"><path d="M5 0v9L0 4.500z" /></svg>
        </button>
        <div className="flex-1 bg-[#dadada]">
          <div className="h-full w-[657px] border border-l-0 border-[#777] bg-white" />
        </div>
        <button type="button" aria-label="右へスクロール" className="flex w-[19px] items-center justify-center border border-[#777] bg-white">
          <svg width="5" height="9" viewBox="0 0 5 9" fill="#6a6a6a"><path d="M0 0v9l5-4.500z" /></svg>
        </button>
      </div>
    </div>
  );
}

function StatusBar() {
  const [zoom, setZoom] = useState(100);

  return (
    <footer className="flex h-[24px] items-center bg-[#f3f3f3] text-[15px] text-[#333]">
      <span className="ml-[9px]">準備完了</span>
      <button type="button" className="ml-[24px] flex items-center gap-[3px] whitespace-nowrap text-[13px]">
        <svg width="20" height="18" viewBox="0 0 20 18" fill="none" stroke="#555" strokeWidth="1.300">
          <path d="M5 1C0 4 0 11 5 14" strokeDasharray="4 2" />
          <path d="M8 1v7M5 5h7M14 3v5M12 7h6" />
          <path d="M9 12l4 4 6-8" strokeWidth="2.500" />
        </svg>
        アクセシビリティ: 問題ありません
      </button>
      <div className="ml-auto flex h-full">
        <Tool label="標準" w="w-[50px]" className="bg-[#c6c6c6]">
          <svg width="17" height="17" viewBox="0 0 17 17" fill="none" stroke="#666">
            <path d="M.5 .5h16v16H.5zM.5 5.500h16M.5 11h16M5.500 .5v16M11 .5v16" />
          </svg>
        </Tool>
        <Tool label="ページ レイアウト" w="w-[50px]">
          <svg width="17" height="15" viewBox="0 0 17 15" fill="none" stroke="#666">
            <path d="M.5 .5h16v14H.5zM4 2.500h9v10H4zM6 5h5M6 7.500h5M6 10h5" />
          </svg>
        </Tool>
        <Tool label="改ページ プレビュー" w="w-[50px]">
          <svg width="17" height="15" viewBox="0 0 17 15" fill="none" stroke="#666">
            <path d="M.5 .5h16v14H.5zM.5 9.500h10v-9M5.500 .5v9" />
          </svg>
        </Tool>
      </div>
      <div className="ml-[5px] mr-[11px] flex items-center">
        <button type="button" aria-label="縮小" className="mr-[2px] flex w-[16px] justify-center"><span className="h-px w-[10px] bg-[#333]" /></button>
        <input
          type="range"
          aria-label="ズーム"
          min="10"
          max="190"
          value={zoom}
          onChange={(e) => setZoom(Number(e.target.value))}
          className="h-[14px] w-[125px] appearance-none bg-[linear-gradient(#333,#333)] bg-[length:100%_1px] bg-center bg-no-repeat [&::-webkit-slider-thumb]:h-[14px] [&::-webkit-slider-thumb]:w-[6px] [&::-webkit-slider-thumb]:appearance-none [&::-webkit-slider-thumb]:bg-[#666]"
        />
        <button type="button" aria-label="拡大" className="ml-[6px] mr-[14px]">
          <svg width="10" height="10" viewBox="0 0 10 10" stroke="#333"><path d="M5 0v10M0 5h10" /></svg>
        </button>
        <span className="w-[44px] text-right">{zoom}%</span>
      </div>
    </footer>
  );
}

function Annotations() {
  return (
    <div className="pointer-events-none absolute inset-0">
      <svg className="absolute inset-0 h-full w-full" fill="none" strokeWidth="5" stroke="#ed1c24">
        {FRAMES.map(([x, y, w, h]) => (
          <rect key={`${x}-${y}`} x={x + 2.5} y={y + 2.5} width={w - 5} height={h - 5} />
        ))}
        <ellipse cx="1038.5" cy="745.5" rx="80" ry="41" />
        {ARROWS.map((points) => (
          <polygon key={points} points={points} stroke="#000" strokeLinejoin="round" />
        ))}
      </svg>
      {NOTES.map((note) => (
        <p key={note.text} className={`absolute whitespace-nowrap text-[33px] leading-[45px] text-black ${note.pos}`}>
          {note.text}
        </p>
      ))}
    </div>
  );
}

export default function App() {
  return (
    <div className="relative min-h-screen w-full bg-white font-['Noto_Sans_CJK_JP',sans-serif]">
      <main className="pl-[432px] pr-[347px] pt-[233px] font-['Noto_Sans','Noto_Sans_CJK_JP',sans-serif] [font-feature-settings:'palt']">
        <TitleBar />
        <TabRow />
        <Ribbon />
        <FormulaBar />
        <Sheet active={{ col: 'G', row: 8 }} />
        <SheetTabs />
        <StatusBar />
      </main>
      <Annotations />
    </div>
  );
}
